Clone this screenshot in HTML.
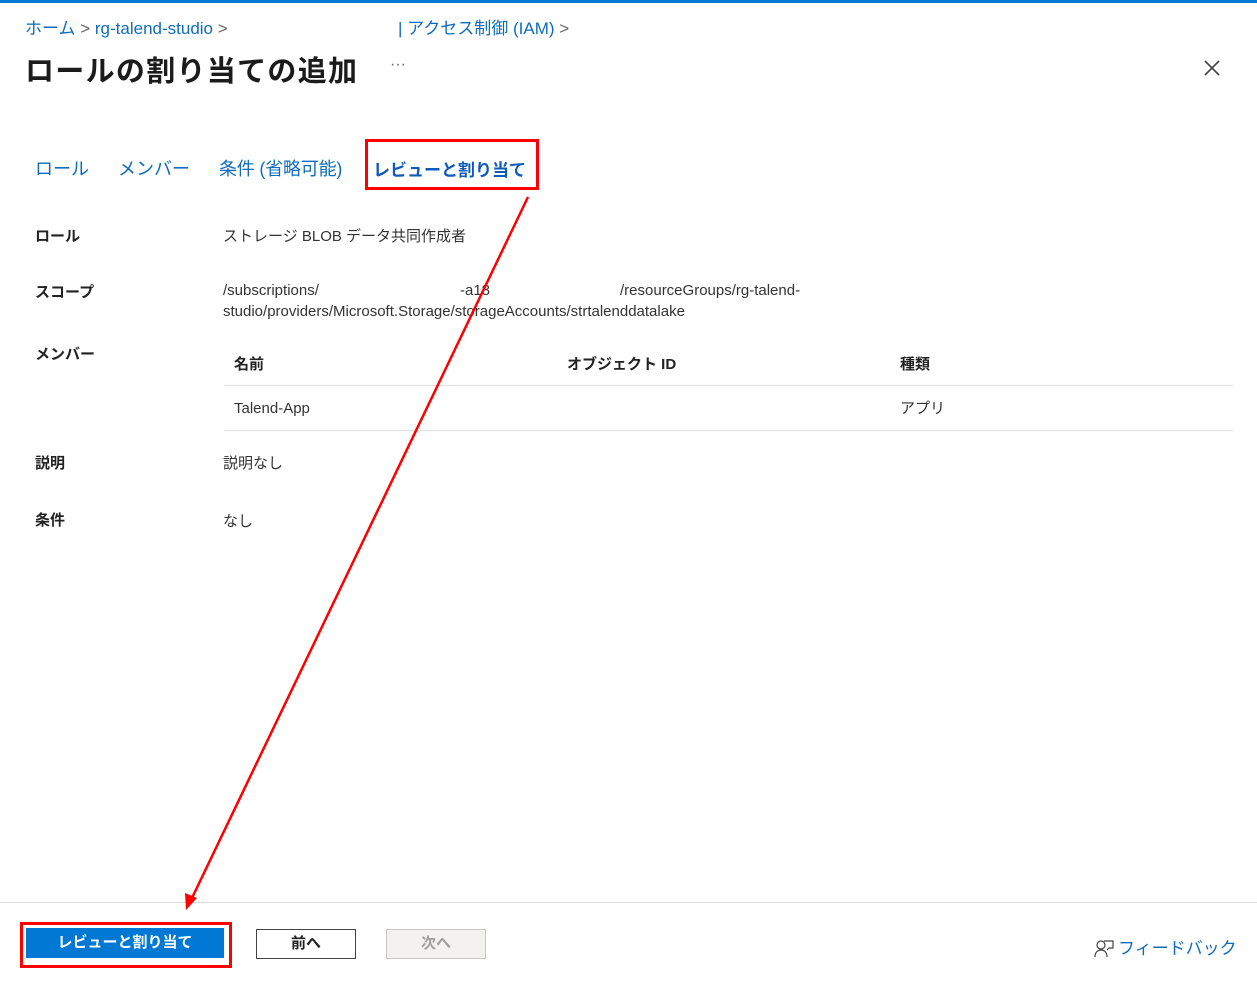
<!DOCTYPE html>
<html><head><meta charset="utf-8"><style>
body{margin:0;width:1257px;height:984px;background:#fff;position:relative;overflow:hidden;font-family:"Liberation Sans","Noto Sans CJK JP",sans-serif;color:#323130}
.a{position:absolute;white-space:nowrap}
.blue{color:#0f6cbd}
.lbl{font-weight:bold;font-size:15px;color:#222}
.v{font-size:15px;color:#333}
</style></head><body>
<div class="a" style="left:0;top:0;width:1257px;height:3px;background:#0078d4"></div>
<div class="a blue" style="left:25px;top:14px;font-size:17px">ホーム <span style="color:#666">&gt;</span> rg-talend-studio <span style="color:#666">&gt;</span></div>
<div class="a blue" style="left:398px;top:14px;font-size:17px">| アクセス制御 (IAM) <span style="color:#666">&gt;</span></div>
<div class="a" style="left:25px;top:48px;font-size:29px;font-weight:bold;color:#1b1b1b;letter-spacing:1.3px">ロールの割り当ての追加</div>
<div class="a" style="left:390px;top:56px;font-size:16px;color:#666">···</div>
<svg class="a" style="left:1203px;top:59px" width="18" height="18"><path d="M2 2L16 16M16 2L2 16" stroke="#444" stroke-width="1.6"/></svg>
<div class="a blue" style="left:35px;top:155px;font-size:18px">ロール</div>
<div class="a blue" style="left:118px;top:155px;font-size:18px">メンバー</div>
<div class="a blue" style="left:219px;top:155px;font-size:18px;letter-spacing:-0.2px">条件 (省略可能)</div>
<div class="a" style="left:373px;top:156px;font-size:17px;font-weight:bold;color:#0f5bbd">レビューと割り当て</div>
<div class="a" style="left:365px;top:139px;width:168px;height:45px;border:3px solid #f00"></div>
<div class="a lbl" style="left:35px;top:225px">ロール</div>
<div class="a v" style="left:223px;top:225px">ストレージ BLOB データ共同作成者</div>
<div class="a lbl" style="left:35px;top:281px">スコープ</div>
<div class="a v" style="left:223px;top:282px">/subscriptions/</div>
<div class="a v" style="left:460px;top:282px">-a18</div>
<div class="a v" style="left:620px;top:282px">/resourceGroups/rg-talend-</div>
<div class="a v" style="left:223px;top:303px">studio/providers/Microsoft.Storage/storageAccounts/strtalenddatalake</div>
<div class="a lbl" style="left:35px;top:343px">メンバー</div>
<div class="a lbl" style="left:234px;top:353px">名前</div>
<div class="a lbl" style="left:567px;top:353px">オブジェクト ID</div>
<div class="a lbl" style="left:900px;top:353px">種類</div>
<div class="a" style="left:224px;top:385px;width:1009px;height:1px;background:#e1dfdd"></div>
<div class="a v" style="left:234px;top:400px">Talend-App</div>
<div class="a v" style="left:900px;top:397px">アプリ</div>
<div class="a" style="left:224px;top:430px;width:1009px;height:1px;background:#e1dfdd"></div>
<div class="a lbl" style="left:35px;top:452px">説明</div>
<div class="a v" style="left:223px;top:452px">説明なし</div>
<div class="a lbl" style="left:35px;top:509px">条件</div>
<div class="a v" style="left:223px;top:510px">なし</div>
<div class="a" style="left:0;top:902px;width:1257px;height:1px;background:#ddd"></div>
<div class="a" style="left:20px;top:922px;width:206px;height:40px;border:3px solid #f00"></div>
<div class="a" style="left:26px;top:928px;width:198px;height:30px;background:#0078d4;color:#fff;font-weight:bold;font-size:15px;text-align:center;line-height:30px">レビューと割り当て</div>
<div class="a" style="left:256px;top:929px;width:98px;height:28px;border:1px solid #444;font-weight:bold;font-size:15px;text-align:center;line-height:28px;color:#222">前へ</div>
<div class="a" style="left:386px;top:929px;width:98px;height:28px;border:1px solid #c8c6c4;background:#f3f2f1;font-weight:bold;font-size:15px;text-align:center;line-height:28px;color:#a19f9d">次へ</div>
<svg class="a" style="left:1093px;top:937px" width="22" height="22" fill="none" stroke="#444" stroke-width="1.2"><circle cx="8" cy="8" r="4"/><path d="M2 20c0-5 3-7 6-7s6 2 6 7M11 4h9v7h-4l-2 2"/></svg>
<div class="a blue" style="left:1118px;top:934px;font-size:17px">フィードバック</div>
<svg class="a" style="left:0;top:0" width="1257" height="984"><line x1="528" y1="197" x2="192" y2="898" stroke="#f00" stroke-width="2.5"/><path d="M186 910L185 893L197 898Z" fill="#f00"/></svg>
</body></html>
